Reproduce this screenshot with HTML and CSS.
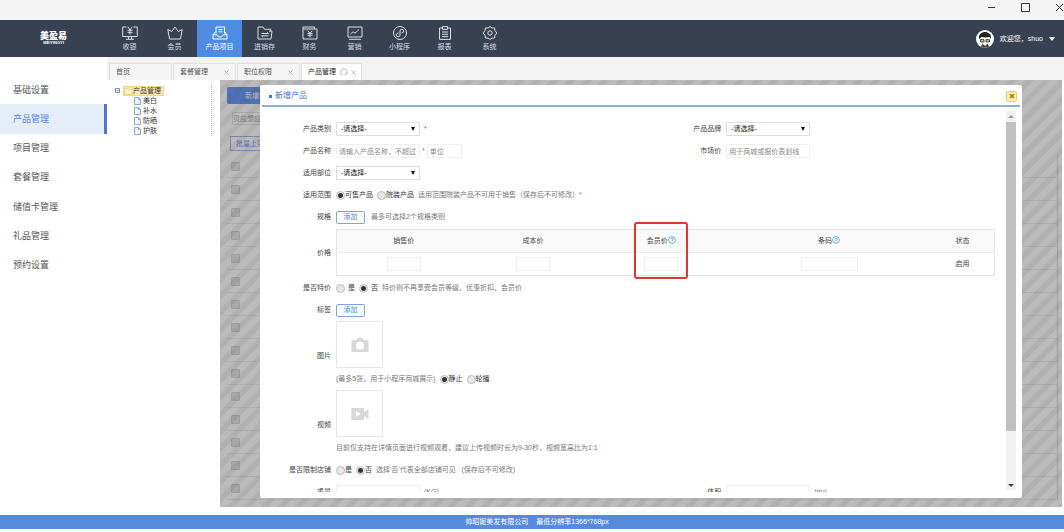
FILE: index.html
```html
<!DOCTYPE html>
<html lang="zh-CN">
<head>
<meta charset="utf-8">
<title>产品管理</title>
<link rel="stylesheet" href="styles.css">
</head>
<body>
<div class="titlebar">
  <button class="win-btn" aria-label="最小化"><svg viewBox="0 0 9 9"><path d="M1 4.5h7"/></svg></button>
  <button class="win-btn" aria-label="最大化"><svg viewBox="0 0 9 9"><path d="M.5.5h8v8h-8z"/></svg></button>
  <button class="win-btn" aria-label="关闭"><svg viewBox="0 0 9 9"><path d="M1 1l7 7M8 1l-7 7"/></svg></button>
</div>
<header class="header">
  <div class="logo"><span class="logo-name">美盈易</span><span class="logo-sub">MEIYINGYI</span></div>
  <nav class="nav">
    <a class="nav-item" href="#"><svg viewBox="0 0 16 14"><path d="M4.500 1H.7v9.500h14.600V1h-3.800M4 13.300h8M6.500 10.500v2.500M9.500 10.500v2.500M5.800.800L8 4l2.200-3.200M5.500 4.300h5M5.500 6.400h5M8 4v4.800"/></svg><span>收银</span></a>
    <a class="nav-item" href="#"><svg viewBox="0 0 16 14"><path d="M2.500 13L.8 3.500l4 2L8 1l3.200 4.500 4-2L13.500 13z"/></svg><span>会员</span></a>
    <a class="nav-item active" href="#"><svg viewBox="0 0 16 14"><path d="M4 7.500V1h8.500v6.500M6.500 3.500h4M6.500 5.800h4M3.500 5.500L1 8.800V13h14V8.800l-2.300-3.300M1 8.800h4l1.300 2h3.400l1.300-2h4"/></svg><span>产品项目</span></a>
    <a class="nav-item" href="#"><svg viewBox="0 0 16 14"><path d="M1 13V1h5l1.500 2.300h6.300v1.900M1 13h13l1-7.800h-3M4.500 7.500h7L10 6.300M11.500 9.800h-7L6 11"/></svg><span>进销存</span></a>
    <a class="nav-item" href="#"><svg viewBox="0 0 16 14"><path d="M1 3h14v10H1zM1 3V1h11.500v2M5.800 4.800L8 7.300l2.200-2.500M5.500 7.500h5M5.500 9.300h5M8 7.300v4.200"/></svg><span>财务</span></a>
    <a class="nav-item" href="#"><svg viewBox="0 0 16 14"><path d="M1 1h14v10H1zM2 13.300h12M3.500 8L6 5.800l2 1.400 4-3.700"/></svg><span>营销</span></a>
    <a class="nav-item" href="#"><svg viewBox="0 0 16 14"><circle cx="8" cy="7" r="6.500"/><path d="M6.500 7.200a1.800 1.800 0 1 0 1.500 1.800V5a1.800 1.800 0 1 1 1.700 1.800"/></svg><span>小程序</span></a>
    <a class="nav-item" href="#"><svg viewBox="0 0 16 14"><path d="M5.500 2h-3v11.400h11V2h-3M5.500.600h5v2.800h-5zM5 6h6M5 8.300h6M5 10.600h6"/></svg><span>报表</span></a>
    <a class="nav-item" href="#"><svg viewBox="0 0 16 14"><path d="M8 .500L10 2l2.600-.100.300 2.600L14.800 7l-1.900 2.500-.300 2.600L10 12l-2 1.500L6 12l-2.600.100-.300-2.600L1.200 7l1.900-2.500.300-2.600L6 2z"/><circle cx="8" cy="7" r="2.200"/></svg><span>系统</span></a>
  </nav>
  <button class="user">
    <svg class="avatar" viewBox="0 0 18 18"><circle cx="9" cy="9" r="9" fill="#fff"/><path d="M3 9C2 4 6 2 9 2s7 2 6 7l-1.500-2-4 .5-4-.5z" fill="#222"/><path d="M4.500 9.500h3.500v2.500H4.500zM10 9.500h3.500v2.500H10z" fill="#b9b58f" stroke="#333" stroke-width=".8"/><path d="M5 17l1-3h6l1 3q-4 1.500-8 0z" fill="#444"/><path d="M7 14h4l-2 2z" fill="#fff"/></svg>
    <span>欢迎您，shuo</span><span class="caret"></span>
  </button>
</header>
<div class="main">
  <nav class="sidebar">
    <a class="side-item" href="#">基础设置</a>
    <a class="side-item active" href="#">产品管理</a>
    <a class="side-item" href="#">项目管理</a>
    <a class="side-item" href="#">套餐管理</a>
    <a class="side-item" href="#">储值卡管理</a>
    <a class="side-item" href="#">礼品管理</a>
    <a class="side-item" href="#">预约设置</a>
  </nav>
  <div class="workspace">
    <div class="tabs">
      <a class="tab" href="#">首页</a>
      <a class="tab" href="#">套餐管理<svg class="x" viewBox="0 0 5 5"><path d="M.5.5l4 4M4.500.500l-4 4"/></svg></a>
      <a class="tab" href="#">职位权限<svg class="x" viewBox="0 0 5 5"><path d="M.5.5l4 4M4.500.500l-4 4"/></svg></a>
      <a class="tab active" href="#">产品管理<svg class="refresh" viewBox="0 0 8 8"><path d="M3 7.300A3.300 3.300 0 1 1 5.500 7M7 4.500L5.500 7"/></svg><svg class="x" viewBox="0 0 5 5"><path d="M.5.5l4 4M4.500.500l-4 4"/></svg></a>
    </div>
    <div class="content">
      <aside class="tree">
        <div class="tree-inner">
          <div class="tree-root"><button class="toggle" aria-label="折叠"><svg viewBox="0 0 5 5"><path d="M.5.5h4v4h-4zM1.500 2.500h2"/></svg></button><a class="tree-label" href="#"><svg viewBox="0 0 9 8"><path d="M.5 7.500v-6h3l1 1h4v5z" fill="#fff3c8" stroke="#e6bf5c" stroke-width=".6"/></svg>产品管理</a></div>
          <a class="leaf" href="#"><svg viewBox="0 0 7 8"><path d="M.5.5h4l2 2v5h-6zM4.500.500v2h2"/></svg>美白</a>
          <a class="leaf" href="#"><svg viewBox="0 0 7 8"><path d="M.5.5h4l2 2v5h-6zM4.500.500v2h2"/></svg>补水</a>
          <a class="leaf" href="#"><svg viewBox="0 0 7 8"><path d="M.5.5h4l2 2v5h-6zM4.500.500v2h2"/></svg>防晒</a>
          <a class="leaf" href="#"><svg viewBox="0 0 7 8"><path d="M.5.5h4l2 2v5h-6zM4.500.500v2h2"/></svg>护肤</a>
        </div>
      </aside>
      <section class="stage">
        <div class="list">
          <button class="new-btn">新增</button>
          <input class="filter" aria-label="供应商" placeholder="贝应想应商">
          <button class="batch-btn">批量上架</button>
          <div class="list-rows">
            <div class="list-row"><input type="checkbox" aria-label="选择"></div>
            <div class="list-row"><input type="checkbox" aria-label="选择"></div>
            <div class="list-row"><input type="checkbox" aria-label="选择"></div>
            <div class="list-row"><input type="checkbox" aria-label="选择"></div>
            <div class="list-row"><input type="checkbox" aria-label="选择"></div>
            <div class="list-row"><input type="checkbox" aria-label="选择"></div>
            <div class="list-row"><input type="checkbox" aria-label="选择"></div>
            <div class="list-row"><input type="checkbox" aria-label="选择"></div>
            <div class="list-row"><input type="checkbox" aria-label="选择"></div>
            <div class="list-row"><input type="checkbox" aria-label="选择"></div>
            <div class="list-row"><input type="checkbox" aria-label="选择"></div>
            <div class="list-row"><input type="checkbox" aria-label="选择"></div>
            <div class="list-row"><input type="checkbox" aria-label="选择"></div>
            <div class="list-row"><input type="checkbox" aria-label="选择"></div>
            <div class="list-row"><input type="checkbox" aria-label="选择"></div>
          </div>
        </div>
        <div class="mask"></div>
        <div class="modal" role="dialog" aria-labelledby="dlg-title">
          <div class="modal-head"><h2 id="dlg-title">新增产品</h2><button class="close" aria-label="关闭"><svg viewBox="0 0 6 6"><path d="M1 1l4 4M5 1L1 5"/></svg></button></div>
          <div class="modal-body">
            <form class="form">
              <div class="row pair">
                <label for="cat">产品类别</label>
                <div class="field"><span class="select"><select id="cat"><option>-请选择-</option></select></span><span class="req">*</span></div>
                <label for="brand">产品品牌</label>
                <div class="field"><span class="select"><select id="brand"><option>-请选择-</option></select></span></div>
              </div>
              <div class="row pair">
                <label for="name">产品名称</label>
                <div class="field tight"><input class="text" id="name" placeholder="请输入产品名称，不超过"><span class="req">*</span><input class="text unit" aria-label="单位" placeholder="单位"></div>
                <label for="market">市场价</label>
                <div class="field"><input class="text" id="market" placeholder="用于商城或报价表划线"></div>
              </div>
              <div class="row">
                <label for="part">适用部位</label>
                <div class="field"><span class="select"><select id="part"><option>-请选择-</option></select></span></div>
              </div>
              <div class="row">
                <span class="label">适用范围</span>
                <div class="field"><label class="opt"><input type="radio" name="scope" checked>可售产品</label><label class="opt"><input type="radio" name="scope">院装产品</label><span class="hint">适用范围院装产品不可用于销售（保存后不可修改）<span class="req">*</span></span></div>
              </div>
              <div class="row">
                <span class="label">规格</span>
                <div class="field wide"><button type="button" class="add">添加</button><span class="hint">最多可选择2个规格类别</span></div>
              </div>
              <div class="row">
                <span class="label">价格</span>
                <table class="price">
                  <colgroup><col class="c-sale"><col class="c-cost"><col class="c-member"><col class="c-code"><col class="c-state"></colgroup>
                  <thead><tr><th>销售价</th><th>成本价</th><th><div class="marked">会员价<svg class="help" viewBox="0 0 8 8"><circle cx="4" cy="4" r="3.400"/><path d="M2.800 3.200a1.200 1.200 0 1 1 1.200 1.300v.500M4 5.800v.500"/></svg><span class="mark"></span></div></th><th>条码<svg class="help" viewBox="0 0 8 8"><circle cx="4" cy="4" r="3.400"/><path d="M2.800 3.200a1.200 1.200 0 1 1 1.200 1.300v.500M4 5.800v.500"/></svg></th><th>状态</th></tr></thead>
                  <tbody><tr><td><input class="text cell" aria-label="销售价"></td><td><input class="text cell" aria-label="成本价"></td><td><input class="text cell" aria-label="会员价"></td><td><input class="text cell code" aria-label="条码"></td><td>启用</td></tr></tbody>
                </table>
              </div>
              <div class="row">
                <span class="label">是否特价</span>
                <div class="field"><label class="opt spaced"><input type="radio" name="special">是</label><label class="opt spaced"><input type="radio" name="special" checked>否</label><span class="hint">特价则不再享受会员等级、优惠折扣、会员价</span></div>
              </div>
              <div class="row">
                <span class="label">标签</span>
                <div class="field"><button type="button" class="add">添加</button></div>
              </div>
              <div class="row">
                <span class="label">图片</span>
                <div class="media">
                  <button type="button" class="upload" aria-label="上传图片"><svg viewBox="0 0 18 16"><path fill-rule="evenodd" d="M1.500 3H5l1.500-2h5L13 3h3.500q1 0 1 1v10q0 1-1 1h-15q-1 0-1-1V4q0-1 1-1zM9 4.700a4 4 0 1 0 0 8 4 4 0 0 0 0-8z"/></svg></button>
                  <div class="field"><span class="hint">(最多5张，用于小程序商城展示)</span><label class="opt"><input type="radio" name="show" checked>静止</label><label class="opt"><input type="radio" name="show">轮播</label></div>
                </div>
              </div>
              <div class="row">
                <span class="label">视频</span>
                <div class="media">
                  <button type="button" class="upload" aria-label="上传视频"><svg viewBox="0 0 18 16"><path fill-rule="evenodd" d="M1 2h12v4l4.500-3v10L13 10v4H1q-.7 0-.7-.7V2.700Q.3 2 1 2zM5 5v6l4.500-3z"/></svg></button>
                  <div class="field"><span class="hint">目前仅支持在详情页面进行视频观看，建议上传视频时长为9-30秒，视频宽高比为1:1</span></div>
                </div>
              </div>
              <div class="row">
                <span class="label">是否限制店铺</span>
                <div class="field"><label class="opt"><input type="radio" name="shop">是</label><label class="opt"><input type="radio" name="shop" checked>否</label><span class="hint">选择'否'代表全部店铺可见 &nbsp; (保存后不可修改)</span></div>
              </div>
              <div class="row pair">
                <label for="weight">重量</label>
                <div class="field"><input class="text" id="weight"><span class="hint">(KG)</span></div>
                <label for="volume">体积</label>
                <div class="field"><input class="text" id="volume"><span class="hint">(m³)</span></div>
              </div>
            </form>
            <div class="scrollbar"><span class="arrow up"></span><span class="thumb"></span><span class="arrow down"></span></div>
          </div>
        </div>
      </section>
    </div>
  </div>
</div>
<footer class="footer"><span>帅昭妮美发有限公司</span><span>最低分辨率1366*768px</span></footer>
</body>
</html>
```
FILE: styles.css
```css
* { box-sizing: border-box; }
body {
  margin: 0;
  height: 100vh;
  display: flex;
  flex-direction: column;
  padding-bottom: 3px;
  overflow: hidden;
  background: #fff;
  color: #444;
  font: 7px/10px "Liberation Sans", "Noto Sans CJK SC", sans-serif;
}
a { color: inherit; text-decoration: none; }
button, input, select { font: inherit; color: inherit; margin: 0; padding: 0; border: 0; background: none; }
svg { fill: none; stroke: currentColor; flex: none; }

.titlebar {
  flex: none;
  height: 20px;
  display: flex;
  justify-content: flex-end;
  gap: 25px;
  padding-top: 3px;
  background: #f4f4f4;
}
.win-btn { width: 9px; height: 9px; color: #333; }
.win-btn svg { display: block; width: 9px; height: 9px; }

.header {
  flex: none;
  height: 37px;
  display: flex;
  background: #364252;
  color: #d8dee5;
}
.logo {
  width: 107px;
  display: flex;
  flex-direction: column;
  align-items: center;
  justify-content: center;
  color: #fff;
}
.logo-name { font-size: 9px; line-height: 9px; font-weight: 900; }
.logo-sub { font-size: 4px; line-height: 4px; font-weight: bold; }
.nav { display: flex; flex: 1; }
.nav-item {
  width: 45px;
  display: flex;
  flex-direction: column;
  align-items: center;
  gap: 2px;
  padding-top: 6px;
}
.nav-item.active { background: #4f8be2; color: #fff; }
.nav-item svg { width: 16px; height: 14px; }
.user { display: flex; align-items: center; gap: 6px; padding-right: 9px; color: #fff; }
.avatar { width: 18px; height: 18px; stroke: none; }
.caret { border: 3px solid transparent; border-top: 4px solid #fff; border-bottom: 0; }

.main { flex: 1; display: flex; min-height: 0; }
.sidebar {
  width: 107px;
  height: 223px;
  padding-top: 18px;
  display: flex;
  flex-direction: column;
  font-size: 9px;
  color: #555;
}
.side-item { flex: 1; display: flex; align-items: center; padding-left: 13px; }
.side-item.active { background: #e4edf9; color: #5a86d6; border-right: 3px solid #4f7ac0; }

.workspace { flex: 1; display: flex; flex-direction: column; min-width: 0; }
.tabs {
  flex: none;
  height: 23px;
  display: flex;
  gap: 1px;
  padding: 6px 0 0 2px;
  background: #f3f3f3;
}
.tab {
  width: 63px;
  display: flex;
  align-items: center;
  padding: 0 6px;
  border: 1px solid #e0e0e0;
  border-bottom: 0;
  background: #f5f5f5;
  color: #555;
}
.tab .x { width: 5px; height: 5px; margin-left: auto; stroke: #999; stroke-width: .6; }
.tab.active { width: 61px; padding-right: 5px; background: #fff; color: #222; }
.refresh { width: 8px; height: 8px; margin-left: 4px; stroke: #999; stroke-width: .7; }

.content { flex: 1; display: flex; min-height: 0; padding: 0 2px 8px 0; }
.tree { width: 113px; padding: 5px 8px 0 8px; }
.tree-inner { border-right: 1px dotted #aaa; }
.tree-root { display: flex; align-items: center; gap: 3px; height: 11px; }
.toggle { width: 5px; height: 5px; color: #718fb5; }
.toggle svg { display: block; width: 5px; height: 5px; }
.tree-label {
  display: flex;
  align-items: center;
  height: 10px;
  padding: 0 2px 0 0;
  border: 1px solid #f7d48c;
  background: #ffe8b0;
  color: #333;
}
.tree-label svg { width: 9px; height: 8px; }
.leaf { display: flex; align-items: center; gap: 2px; height: 10px; padding-left: 19px; color: #333; }
.leaf svg { width: 7px; height: 8px; stroke: #6f8fcb; stroke-width: .8; fill: #f2f6ff; }

.stage { flex: 1; position: relative; min-width: 0; overflow: hidden; }
.list { display: flex; flex-direction: column; align-items: flex-start; height: 100%; padding: 7px 4px 0 7px; }
.new-btn { width: 96px; height: 17px; padding-left: 18px; text-align: left; border-radius: 2px; background: #3f7bf5; color: #fff; }
.filter { width: 96px; height: 13px; margin: 8px 0 11px 5px; border: 1px solid #ddd; }
.batch-btn { width: 60px; height: 15px; margin-left: 3px; padding-left: 5px; text-align: left; border: 1px solid #8fa4dc; color: #4b6fd0; }
.list-rows { align-self: stretch; margin-top: 4px; border-right: 1px solid #ccc; }
.list-row { height: 23px; padding: 7px 0 0 4px; border-bottom: 1px solid #e9e9e9; }
.list-row input { appearance: none; display: block; width: 9px; height: 9px; border: 1px solid #ccc; border-radius: 1px; background: #ddd; }
.mask {
  position: absolute;
  inset: 0;
  background: repeating-linear-gradient(135deg, rgba(100,100,100,.44) 0, rgba(100,100,100,.44) 5px, rgba(95,95,95,.49) 7px, rgba(95,95,95,.49) 11px, rgba(100,100,100,.44) 12px);
}
.modal {
  position: absolute;
  inset: 5px 40px 9px 40px;
  display: flex;
  flex-direction: column;
  padding: 0 2px 6px 0;
  border-radius: 2px;
  background: #fff;
}
.modal-head {
  flex: none;
  display: flex;
  align-items: center;
  justify-content: space-between;
  height: 22px;
  margin-left: 2px;
  padding: 2px 3px 0 7px;
  border-bottom: 2px solid #8fadd8;
}
.modal-head h2 { display: flex; align-items: center; gap: 3px; margin: 0; font-size: 8px; font-weight: normal; color: #4474c8; }
.modal-head h2::before { content: ""; width: 3px; height: 3px; background: #4474c8; }
.close { display: grid; place-items: center; width: 11px; height: 11px; border: 1px solid #efcf60; border-radius: 2px; background: #fff0a8; color: #a87818; }
.close svg { width: 6px; height: 6px; stroke-width: 1.500; }
.modal-body { flex: 1; display: flex; min-height: 0; overflow: hidden; padding-right: 4px; }
.form { flex: 1; padding: 11px 11px 0 0; min-width: 0; }
.scrollbar { width: 10px; margin: 4px 0 2px; display: flex; flex-direction: column; align-items: center; background: #f1f1f1; }
.arrow { flex: none; height: 11px; display: grid; place-items: center; }
.arrow::after { content: ""; border: 3px solid transparent; }
.arrow.up::after { border-top: 0; border-bottom-color: #999; }
.arrow.down::after { border-bottom: 0; border-top-color: #444; }
.thumb { width: 10px; flex: 309; background: #c1c1c1; }
.arrow.down { flex: 56; align-content: end; padding-bottom: 3px; }

.row { display: grid; grid-template-columns: 71px 1fr; column-gap: 5px; align-items: center; }
.row.pair { grid-template-columns: 71px 340fr 38px 267fr; }
.row > label, .label { text-align: right; white-space: nowrap; }
.field { display: flex; align-items: center; gap: 4px; height: 22px; white-space: nowrap; }
.field.tight { gap: 2px; }
.field.wide { gap: 6px; }
.hint { color: #777; }
.req { color: #e06060; }
.select { position: relative; display: flex; width: 84px; height: 14px; border: 1px solid #ddd; border-radius: 1px; }
.select select { appearance: none; width: 100%; padding-left: 4px; color: #111; }
.select::after { content: ""; position: absolute; right: 4px; top: 4px; border: 2px solid transparent; border-top: 4px solid #111; border-bottom: 0; pointer-events: none; }
.text { width: 84px; height: 14px; padding: 0 2px; border: 1px solid #f0f0f0; border-radius: 1px; }
.text::placeholder, .filter::placeholder { color: #888; opacity: 1; }
.unit { width: 35px; }
.opt { display: flex; align-items: center; color: #333; }
.opt.spaced { gap: 3px; }
.opt input { appearance: none; width: 9px; height: 9px; border: 1px solid #bbb; border-radius: 50%; background: #e8e8e8; }
.opt input:checked { background: radial-gradient(circle, #333 0 2px, #eee 3px); }
.add { width: 29px; height: 13px; border: 1px solid #7fa3de; border-radius: 2px; color: #4f80cf; }
.price { width: 100%; margin: 1px 0; table-layout: fixed; border-collapse: collapse; border: 1px solid #e4e4e4; }
.price th, .price td { height: 23px; padding: 0; text-align: center; font-weight: normal; }
.price thead { background: #f9f9f9; border-bottom: 1px solid #eee; }
.price td { line-height: 0; }
.c-sale { width: 134px; }
.c-cost { width: 19%; }
.c-member { width: 20%; }
.c-code { width: 31%; }
.cell { width: 34px; vertical-align: middle; }
.cell.code { width: 57px; }
.help { width: 8px; height: 8px; vertical-align: -1px; stroke: #4f9fd0; stroke-width: .8; }
.marked { position: relative; }
.mark { position: absolute; left: 50%; top: -14px; width: 54px; height: 57px; margin-left: -27px; border: 2px solid #d93a30; border-radius: 3px; pointer-events: none; }
.upload { display: grid; place-items: center; width: 47px; height: 47px; border: 1px solid #e6e6e6; color: #d8d8d8; }
.upload svg { width: 18px; height: 16px; fill: currentColor; stroke: none; }

.footer {
  flex: none;
  height: 14px;
  display: flex;
  align-items: center;
  justify-content: center;
  gap: 8px;
  padding-left: 10px;
  background: #568bdc;
  color: #fff;
}
```
